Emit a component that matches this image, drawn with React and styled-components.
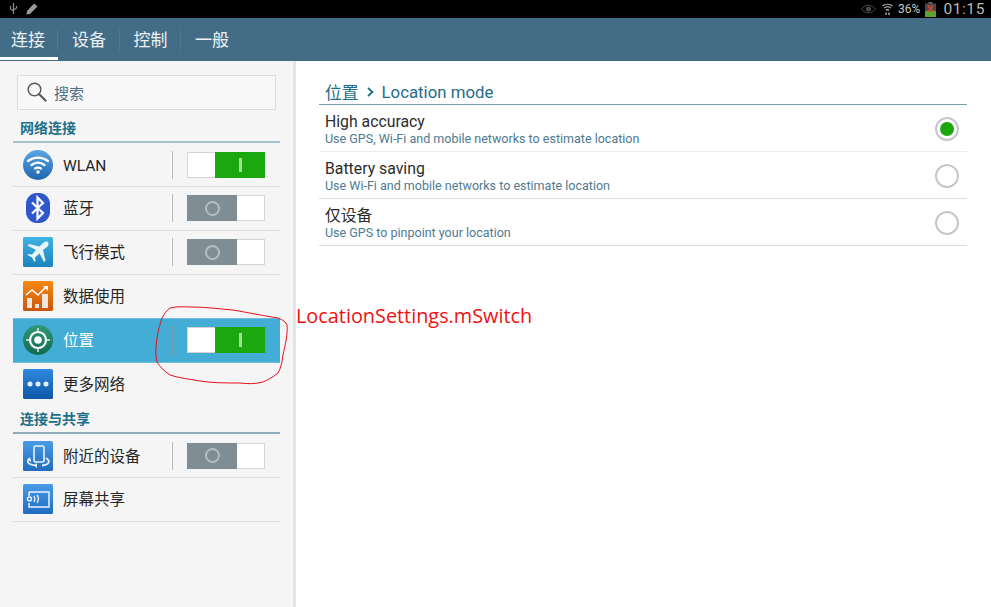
import React from 'react';
import styled, { createGlobalStyle } from 'styled-components';

const Global = createGlobalStyle`
  html, body { margin: 0; padding: 0; background: #fff; }
  body { font-family: Roboto, "Noto Sans CJK SC", sans-serif; overflow: hidden; }
`;

const Page = styled.div`
  position: relative;
  width: 991px;
  height: 607px;
  display: flex;
  flex-direction: column;
  overflow: hidden;
`;

// status bar
const StatusBar = styled.div`
  height: 18px;
  background: #000;
  display: flex;
  align-items: center;
  justify-content: space-between;
  padding: 0 6px 0 9px;
`;
const StatusGroup = styled.div`
  display: flex;
  align-items: center;
  gap: ${p => p.$gap || 5}px;
`;
const Percent = styled.span`
  color: #c9c9c9;
  font-size: 12px;
`;
const Clock = styled.span`
  color: #b9b9b9;
  font-size: 15.5px;
  letter-spacing: 0.6px;
  margin-left: 2px;
`;

// tabs
const TabBar = styled.div`
  height: 43px;
  background: #436d87;
  display: flex;
`;
const Tab = styled.div`
  position: relative;
  width: ${p => p.$w}px;
  height: 38px;
  padding: 1px ${p => (p.$active ? 2 : 0)}px 0 0;
  box-sizing: content-box;
  display: flex;
  align-items: center;
  justify-content: center;
  color: #eef2f4;
  font-size: 17px;
  border-bottom: 3px solid ${p => (p.$active ? '#fff' : 'transparent')};
  &::after {
    content: '';
    position: absolute;
    right: 0;
    top: 12px;
    height: 20px;
    width: 1px;
    background: ${p => (p.$last ? 'transparent' : '#527b93')};
  }
`;

const Body = styled.div`
  flex: 1;
  display: flex;
  min-height: 0;
`;

// left list
const Sidebar = styled.aside`
  width: 267px;
  background: #f5f5f5;
  border-right: 3px solid #e4e4e4;
  padding: 14px 13px 0 13px;
`;
const SearchBox = styled.div`
  width: 259px;
  height: 35px;
  margin-left: 4px;
  box-sizing: border-box;
  border: 1px solid #dcdcdc;
  background: #f8f8f8;
  display: flex;
  align-items: center;
  padding: 0 0 1px 9px;
  gap: 7px;
  color: #4e6f84;
  font-size: 15px;
`;
const SectionTitle = styled.div`
  height: ${p => p.$h}px;
  box-sizing: border-box;
  border-bottom: 2px solid ${p => (p.$dark ? '#8fabb8' : '#a9c0ca')};
  padding-left: 7px;
  display: flex;
  align-items: flex-end;
  padding-bottom: 4px;
  color: #1d7089;
  font-size: 14px;
  font-weight: 700;
`;
const Row = styled.div`
  height: ${p => (p.$first ? 43 : p.$last ? 45 : 44)}px;
  box-sizing: border-box;
  display: flex;
  align-items: center;
  padding-left: 10px;
  padding-bottom: ${p => (p.$first ? 0 : 1)}px;
  border-top: ${p => (p.$first ? 'none' : `1px solid ${p.$lineColor}`)};
  border-bottom: ${p => (p.$last ? '1px solid #dfdfdf' : 'none')};
  background: ${p => (p.$selected ? '#43add6' : 'transparent')};
  color: ${p => (p.$selected ? '#fff' : '#262626')};
  font-size: 15.5px;
`;
const RowIcon = styled.div`
  width: 30px;
  height: 30px;
  flex: none;
  margin-right: 10px;
  display: flex;
`;
const RowLabel = styled.span`
  flex: 1;
  padding: ${p => (p.$latin ? '2px 0 0' : '0 0 2px')};
`;
const ToggleSlot = styled.div`
  width: 108px;
  height: 28px;
  box-sizing: border-box;
  border-left: 1px solid ${p => (p.$selected ? '#7d9ca9' : '#bbbbbb')};
  display: flex;
  align-items: center;
  padding-left: 14px;
`;
const ToggleBody = styled.div`
  width: 78px;
  height: 26px;
  display: flex;
  flex-direction: ${p => (p.$on ? 'row' : 'row-reverse')};
  box-sizing: border-box;
`;
const ToggleBlank = styled.div`
  width: 28px;
  background: #fff;
  box-sizing: border-box;
  border: 1px solid #d4d4d4;
  border-${p => (p.$on ? 'right' : 'left')}: none;
`;
const ToggleKnob = styled.div`
  flex: 1;
  display: flex;
  align-items: center;
  justify-content: center;
  background: ${p => (p.$on ? '#1aa80e' : '#808d95')};
`;
const OnMark = styled.div`
  width: 3px;
  height: 14px;
  background: #9ee38c;
`;
const OffMark = styled.div`
  width: 15px;
  height: 15px;
  box-sizing: border-box;
  border-radius: 50%;
  border: 2px solid #b4bdc2;
`;

// right pane
const Main = styled.main`
  flex: 1;
  background: #fff;
  padding: 18px 24px 0 23px;
`;
const Crumb = styled.div`
  height: 26px;
  box-sizing: border-box;
  border-bottom: 1px solid #7a9bab;
  padding-left: 6px;
  display: flex;
  align-items: center;
  color: #1f6d88;
  font-size: 16.8px;
`;
const Chevron = styled.svg`
  margin: 0 8px;
`;
const Option = styled.div`
  height: 47px;
  box-sizing: border-box;
  border-bottom: 1px solid ${p => (p.$light ? '#ececec' : '#dcdcdc')};
  padding: 2px 8px 0 6px;
  display: flex;
  align-items: center;
  justify-content: space-between;
`;
const OptionText = styled.div`
  display: flex;
  flex-direction: column;
`;
const OptionTitle = styled.span`
  color: #2c2c2c;
  font-size: 15.8px;
  line-height: 19px;
`;
const OptionHint = styled.span`
  color: #4e7a90;
  font-size: 12.53px;
  line-height: 16px;
`;
const Radio = styled.div`
  width: 24px;
  height: 24px;
  box-sizing: border-box;
  border-radius: 50%;
  border: 2px solid #c3c8cb;
  display: flex;
  align-items: center;
  justify-content: center;
  &::after {
    content: '';
    width: 14px;
    height: 14px;
    border-radius: 50%;
    background: ${p => (p.$checked ? '#1aa80e' : 'transparent')};
  }
`;

// annotation over the screenshot
const Note = styled.div`
  position: absolute;
  left: 296px;
  top: 303px;
  color: #f01010;
  font-family: "Open Sans", sans-serif;
  font-size: 19.85px;
  line-height: 25px;
  white-space: nowrap;
`;
const Scribble = styled.svg`
  position: absolute;
  left: 0;
  top: 0;
  pointer-events: none;
`;

function Toggle({ on, selected }) {
  return (
    <ToggleSlot $selected={selected}>
      <ToggleBody $on={on}>
        <ToggleBlank $on={on} />
        <ToggleKnob $on={on}>{on ? <OnMark /> : <OffMark />}</ToggleKnob>
      </ToggleBody>
    </ToggleSlot>
  );
}

const WifiIcon = (
  <svg width="30" height="30" viewBox="0 0 30 30">
    <defs>
      <linearGradient id="gw" x1="0" y1="0" x2="0" y2="1">
        <stop offset="0" stopColor="#5aa5e3" />
        <stop offset="1" stopColor="#1f66b0" />
      </linearGradient>
    </defs>
    <circle cx="15" cy="15" r="15" fill="url(#gw)" />
    <g fill="none" stroke="#fff" strokeWidth="2.2" strokeLinecap="round">
      <path d="M5 11c6-4.500 14-4.500 20 0" />
      <path d="M8.500 15c4-3 9-3 13 0" />
      <path d="M12 18.500c2-1.300 4-1.300 6 0" />
    </g>
    <circle cx="15" cy="22" r="1.800" fill="#fff" />
  </svg>
);

const BluetoothIcon = (
  <svg width="30" height="30" viewBox="0 0 30 30">
    <rect x="3" y="0" width="24" height="30" rx="11" fill="#2f57cc" />
    <path d="M9 9.500 20 20l-5.500 5.500v-21L20 10 9 20.500" fill="none" stroke="#fff" strokeWidth="2.200" />
  </svg>
);

const PlaneIcon = (
  <svg width="30" height="30" viewBox="0 0 30 30">
    <defs>
      <linearGradient id="gp" x1="0" y1="0" x2="0" y2="1">
        <stop offset="0" stopColor="#3fb4e2" />
        <stop offset="1" stopColor="#1b83bd" />
      </linearGradient>
    </defs>
    <rect width="30" height="30" rx="1.500" fill="url(#gp)" />
    <path d="M25 5c-1.500-1-3.500-.5-5 1l-3.500 3.500L6 7 4.500 8.500 13 13l-4 4.500-3.500-.5-1 1 4.500 2.500 2.500 4.500 1-1-.5-3.500 4.500-4 4.500 8.500 1.500-1.500-2.500-10.500L24 10c1.500-1.500 2-3.500 1-5z" fill="#e9f4f8" />
  </svg>
);

const ChartIcon = (
  <svg width="30" height="30" viewBox="0 0 30 30">
    <defs>
      <linearGradient id="gc" x1="0" y1="0" x2="0" y2="1">
        <stop offset="0" stopColor="#f58a14" />
        <stop offset="1" stopColor="#c9540a" />
      </linearGradient>
    </defs>
    <rect width="30" height="30" rx="1.500" fill="url(#gc)" />
    <path d="M3 14l6-5 6 5 8-8" fill="none" stroke="#fff" strokeWidth="1.600" />
    <path d="M20 5h5v5z" fill="#fff" />
    <g fill="#f4e6da">
      <rect x="4" y="17" width="5" height="10" />
      <rect x="12" y="23" width="4" height="4" />
      <rect x="19" y="13" width="6" height="14" />
    </g>
  </svg>
);

const TargetIcon = (
  <svg width="30" height="30" viewBox="0 0 30 30">
    <defs>
      <linearGradient id="gt" x1="0" y1="0" x2="0" y2="1">
        <stop offset="0" stopColor="#2f9a78" />
        <stop offset="1" stopColor="#13694f" />
      </linearGradient>
    </defs>
    <circle cx="15" cy="15" r="15" fill="url(#gt)" />
    <circle cx="15" cy="15" r="8" fill="none" stroke="#fff" strokeWidth="2.200" />
    <circle cx="15" cy="15" r="3.800" fill="#fff" />
    <path d="M15 3v4M15 23v4M3 15h4M23 15h4" stroke="#dfeee8" strokeWidth="1.500" />
  </svg>
);

const DotsIcon = (
  <svg width="30" height="30" viewBox="0 0 30 30">
    <defs>
      <linearGradient id="gd" x1="0" y1="0" x2="0" y2="1">
        <stop offset="0" stopColor="#2f8ae0" />
        <stop offset="1" stopColor="#0f57a8" />
      </linearGradient>
    </defs>
    <rect width="30" height="30" rx="1.500" fill="url(#gd)" />
    <circle cx="7" cy="15" r="2.500" fill="#e6f0fa" />
    <circle cx="15" cy="15" r="2.500" fill="#e6f0fa" />
    <circle cx="23" cy="15" r="2.500" fill="#e6f0fa" />
  </svg>
);

const NearbyIcon = (
  <svg width="30" height="30" viewBox="0 0 30 30">
    <defs>
      <linearGradient id="gn" x1="0" y1="0" x2="0" y2="1">
        <stop offset="0" stopColor="#4a9be6" />
        <stop offset="1" stopColor="#1f6cc0" />
      </linearGradient>
    </defs>
    <rect width="30" height="30" rx="1.500" fill="url(#gn)" />
    <rect x="11" y="5" width="10" height="16" rx="1.500" fill="none" stroke="#eaf3fb" strokeWidth="1.600" />
    <path d="M7 17c-5 4-1 7 7 7.500M23 17c5 3 3 7-4 7.500" fill="none" stroke="#eaf3fb" strokeWidth="1.800" />
    <path d="M14 22l-3 2.500 3 2.500zM5 19l3-1v3z" fill="#eaf3fb" />
  </svg>
);

const ShareIcon = (
  <svg width="30" height="30" viewBox="0 0 30 30">
    <defs>
      <linearGradient id="gs" x1="0" y1="0" x2="0" y2="1">
        <stop offset="0" stopColor="#4a9be6" />
        <stop offset="1" stopColor="#1f6cc0" />
      </linearGradient>
    </defs>
    <rect width="30" height="30" rx="1.500" fill="url(#gs)" />
    <path d="M6 8h20v15H6v-4M6 12V8" fill="none" stroke="#eaf3fb" strokeWidth="1.500" />
    <circle cx="6.500" cy="15" r="2" fill="none" stroke="#eaf3fb" strokeWidth="1.400" />
    <path d="M11 12c1.200 2 1.200 4 0 6M14 11c1.800 2.500 1.800 5.500 0 8" fill="none" stroke="#eaf3fb" strokeWidth="1.300" />
  </svg>
);

const tabs = [
  { label: '连接', w: 56, active: true },
  { label: '设备', w: 62 },
  { label: '控制', w: 61 },
  { label: '一般', w: 62, last: true },
];

const networkRows = [
  { label: 'WLAN', icon: WifiIcon, toggle: 'on', latin: true },
  { label: '蓝牙', icon: BluetoothIcon, toggle: 'off' },
  { label: '飞行模式', icon: PlaneIcon, toggle: 'off' },
  { label: '数据使用', icon: ChartIcon },
  { label: '位置', icon: TargetIcon, toggle: 'on', selected: true },
  { label: '更多网络', icon: DotsIcon },
];

const shareRows = [
  { label: '附近的设备', icon: NearbyIcon, toggle: 'off' },
  { label: '屏幕共享', icon: ShareIcon },
];

const modes = [
  { title: 'High accuracy', hint: 'Use GPS, Wi-Fi and mobile networks to estimate location', checked: true, light: true },
  { title: 'Battery saving', hint: 'Use Wi-Fi and mobile networks to estimate location' },
  { title: '仅设备', hint: 'Use GPS to pinpoint your location' },
];

function RowList({ rows, closed }) {
  return rows.map((row, i) => {
    const nearSelected = row.selected || (i > 0 && rows[i - 1].selected);
    return (
      <Row
        key={row.label}
        $first={i === 0}
        $last={closed && i === rows.length - 1}
        $selected={row.selected}
        $lineColor={nearSelected ? '#71bcdb' : '#dfdfdf'}
      >
        <RowIcon>{row.icon}</RowIcon>
        <RowLabel $latin={row.latin}>{row.label}</RowLabel>
        {row.toggle && <Toggle on={row.toggle === 'on'} selected={row.selected} />}
      </Row>
    );
  });
}

export default function App() {
  return (
    <Page>
      <Global />
      <StatusBar>
        <StatusGroup $gap={8}>
          <svg width="9" height="12" viewBox="0 0 9 12">
            <path d="M4.500 0v11M1.500 3v3l3 2M7.500 3v2l-3 2" fill="none" stroke="#8b8b8b" strokeWidth="1.200" />
          </svg>
          <svg width="12" height="12" viewBox="0 0 12 12">
            <path d="M8 .500l3.500 3L4 11 .500 11.500 1 8z" fill="#9a9a9a" />
          </svg>
        </StatusGroup>
        <StatusGroup>
          <svg width="15" height="10" viewBox="0 0 15 10">
            <path d="M.500 5c4-5 10-5 14 0-4 5-10 5-14 0z" fill="none" stroke="#4c4c4c" />
            <circle cx="7.500" cy="5" r="2.500" fill="#4c4c4c" />
          </svg>
          <svg width="11" height="14" viewBox="0 0 13 14" style={{ marginLeft: 1 }}>
            <g fill="none" stroke="#c4c4c4" strokeWidth="1.300">
              <path d="M.500 3.500c3.500-2.800 8.500-2.800 12 0" />
              <path d="M2.500 6c2.500-2 5.500-2 8 0" />
              <path d="M4.500 8.500c1.300-1 2.700-1 4 0" />
            </g>
            <path d="M4 11h1.500v3H4zM7.500 11H9v3H7.500z" fill="#c4c4c4" />
          </svg>
          <Percent>36%</Percent>
          <svg width="11" height="15" viewBox="0 0 11 15">
            <rect x="3.500" y="0" width="4" height="2" fill="#666" />
            <rect x="0" y="1.500" width="11" height="13.500" fill="#4a4a4a" />
            <rect x="0" y="9" width="11" height="6" fill="#5aa52a" />
            <path d="M3 3.500l5 6M8 3.500l-5 6" stroke="#d8402a" strokeWidth="1.800" />
          </svg>
          <Clock>01:15</Clock>
        </StatusGroup>
      </StatusBar>

      <TabBar>
        {tabs.map(t => (
          <Tab key={t.label} $w={t.w} $active={t.active} $last={t.last}>{t.label}</Tab>
        ))}
      </TabBar>

      <Body>
        <Sidebar>
          <SearchBox>
            <svg width="20" height="20" viewBox="0 0 20 20">
              <circle cx="7.500" cy="7.500" r="6.300" fill="none" stroke="#5a5a5a" strokeWidth="1.500" />
              <path d="M12 12l6.500 6.500" stroke="#5a5a5a" strokeWidth="2.200" strokeLinecap="round" />
            </svg>
            搜索
          </SearchBox>
          <SectionTitle $h={33}>网络连接</SectionTitle>
          <RowList rows={networkRows} />
          <SectionTitle $h={28} $dark>连接与共享</SectionTitle>
          <RowList rows={shareRows} closed />
        </Sidebar>

        <Main>
          <Crumb>
            位置
            <Chevron width="7" height="10" viewBox="0 0 7 10">
              <path d="M1 1l4.500 4L1 9" fill="none" stroke="#1f6d88" strokeWidth="1.800" />
            </Chevron>
            Location mode
          </Crumb>
          {modes.map(m => (
            <Option key={m.title} $light={m.light}>
              <OptionText>
                <OptionTitle>{m.title}</OptionTitle>
                <OptionHint>{m.hint}</OptionHint>
              </OptionText>
              <Radio $checked={m.checked} />
            </Option>
          ))}
        </Main>
      </Body>

      <Note>LocationSettings.mSwitch</Note>
      <Scribble width="991" height="607" viewBox="0 0 991 607">
        <path
          d="M170 308C178 306 186 307 192 307C206 307 220 309 233 310C250 313 265 316 278 318C283 320 286 322 287 325C288 335 285 345 283 355C282 362 281 368 278 373C273 377 268 380 263 382C255 384 248 384 240 383C226 383 212 383 200 381C189 379 179 378 170 375C164 371 160 367 157 362C155 354 156 346 157 338C158 331 160 324 162 318C164 314 167 310 170 308Z"
          fill="none"
          stroke="#e8101c"
          strokeWidth="1"
        />
      </Scribble>
    </Page>
  );
}
